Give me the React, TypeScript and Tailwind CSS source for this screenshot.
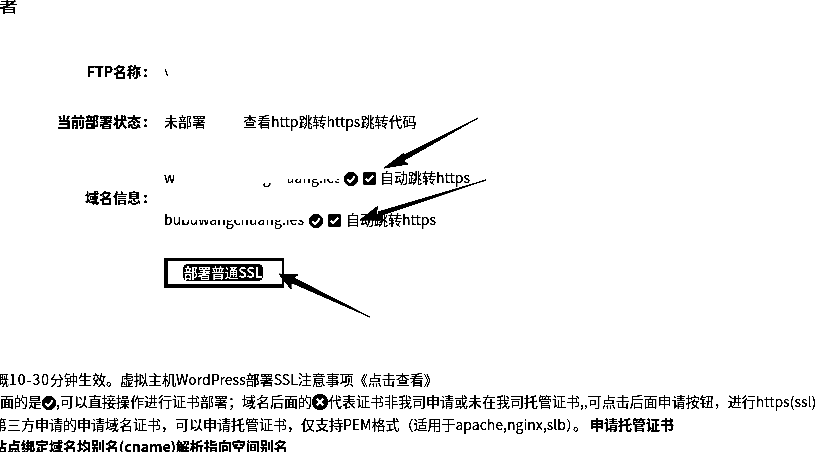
const font = { fontFamily: '"Noto Sans CJK SC", "Open Sans", sans-serif' };

function CircleCheck({ size = 14 }: { size?: number }) {
  return (
    <svg width={size} height={size} viewBox="0 0 16 16" className="shrink-0">
      <circle cx="8" cy="8" r="8" fill="#000" />
      <path d="M3.6 8.4 L6.8 11.4 L12.4 5.2" fill="none" stroke="#fff" strokeWidth="2.8" />
    </svg>
  );
}

function CircleX({ size = 16 }: { size?: number }) {
  return (
    <svg width={size} height={size} viewBox="0 0 16 16" className="inline-block align-[-3px]">
      <circle cx="8" cy="8" r="8" fill="#000" />
      <path d="M4.8 4.8 L11.2 11.2 M11.2 4.8 L4.8 11.2" fill="none" stroke="#fff" strokeWidth="3" />
    </svg>
  );
}

function Box() {
  return (
    <svg width="13" height="13" viewBox="0 0 13 13" className="shrink-0">
      <rect width="13" height="13" rx="2" fill="#000" />
      <path d="M2.8 6.6 L5.4 9.2 L10.2 3.6" fill="none" stroke="#fff" strokeWidth="2.2" />
    </svg>
  );
}

function Label({ text }: { text: string }) {
  return (
    <div className="w-[93px] whitespace-nowrap text-right font-bold">
      {text}
      <span className="inline-block w-[9px] text-center">:</span>
    </div>
  );
}

export default function App() {
  return (
    <div
      style={font}
      className="relative h-[452px] w-[815px] overflow-hidden bg-white text-[14px] text-black brightness-[0.75] contrast-[1000%]"
    >
      <div className="h-[18px] overflow-hidden">
        <div className="mt-[-10px] ml-[-2px] text-[20px] leading-[28px]">署</div>
      </div>

      <div className="ml-[57px] mt-[43px]">
        <div className="flex h-[21px] items-center">
          <Label text="FTP名称" />
          <div className="ml-[14px] mt-[2px] h-[7px] overflow-hidden text-[14px] leading-[7px]">\</div>
        </div>

        <div className="mt-[29px] flex h-[21px] items-center">
          <Label text="当前部署状态" />
          <div className="ml-[14px]">未部署</div>
          <div className="ml-[37px] whitespace-nowrap">查看http跳转https跳转代码</div>
        </div>

        <div className="mt-[35px] flex items-center">
          <div className="mt-[-3px]">
            <Label text="域名信息" />
          </div>
          <div className="ml-[14px] flex flex-col gap-[21px]">
            <div className="flex h-[21px] items-center text-[14px] leading-[21px]">
              <span className="relative h-[21px] w-[175px] overflow-hidden whitespace-nowrap">
                www.bubuwangchuang.ies
                <span className="absolute top-0 left-[10px] h-[16px] w-[114px] bg-white" />
                <span className="absolute top-0 left-[124px] h-[12px] w-[51px] bg-white" />
              </span>
              <span className="ml-[5px] mt-[2px]"><CircleCheck /></span>
              <span className="ml-[5px] mt-[2px]"><Box /></span>
              <span className="ml-[4px] whitespace-nowrap">自动跳转https</span>
            </div>
            <div className="flex h-[21px] items-center text-[14px] leading-[21px]">
              <span className="relative h-[21px] w-[140px] overflow-hidden whitespace-nowrap">
                bubuwangchuang.ies
                <span className="absolute top-0 left-[16px] h-[11px] w-[124px] bg-white" />
              </span>
              <span className="ml-[5px] mt-[2px]"><CircleCheck /></span>
              <span className="ml-[5px] mt-[2px]"><Box /></span>
              <span className="ml-[5px] whitespace-nowrap">自动跳转https</span>
            </div>
          </div>
        </div>

        <div className="ml-[107px] mt-[28px] flex h-[30px] w-[120px] items-center justify-center border-t-[3px] border-r-[2px] border-b-[4px] border-l-[4px] border-black bg-white">
          <span className="mr-[4px] rounded-[5px] bg-black px-[1px] py-[1px] text-[14px] leading-[15px] font-bold tracking-[-0.4px] whitespace-nowrap text-white">
            部署普通SSL
          </span>
        </div>
      </div>

      <div className="mt-[80px] ml-[-14px] text-[14px] leading-[22.3px] whitespace-nowrap">
        <div className="ml-[-5px]">
          大概<span className="tracking-[1px]">10-30</span>分钟生效。虚拟主机WordPress部署SSL注意事项《点击查看》
        </div>
        <div>
          <span>后面的是</span>
          <span className="inline-block align-[-3px]"><CircleCheck /></span>
          ,可以直接操作进行证书部署；域名后面的<CircleX />代表证书非我司申请或未在我司托管证书,,可点击后面申请按钮，进行https(ssl)
        </div>
        <div className="ml-[7px]">
          第三方申请的申请域名证书，可以申请托管证书，仅支持PEM格式（适用于apache,nginx,slb）。
          <span className="ml-[3px] font-bold">申请托管证书</span>
        </div>
        <div className="ml-[7px] font-bold">站点绑定域名均别名(cname)解析指向空间别名</div>
      </div>

      <svg className="pointer-events-none absolute inset-0" width="815" height="452" viewBox="0 0 815 452">
        <g fill="#000" stroke="#000" strokeWidth="0.7">
          <polygon points="478,118 398,158 401,162" />
          <polygon points="384,168 404,153 400,159 408,164" />
          <polygon points="486,180 378,212 379,216" />
          <polygon points="360,220 378,206 376,213 384,220" />
          <polygon points="370,317 292,277 290,282" />
          <polygon points="279,274 298,275 291,279 291,289" />
        </g>
      </svg>
    </div>
  );
}
